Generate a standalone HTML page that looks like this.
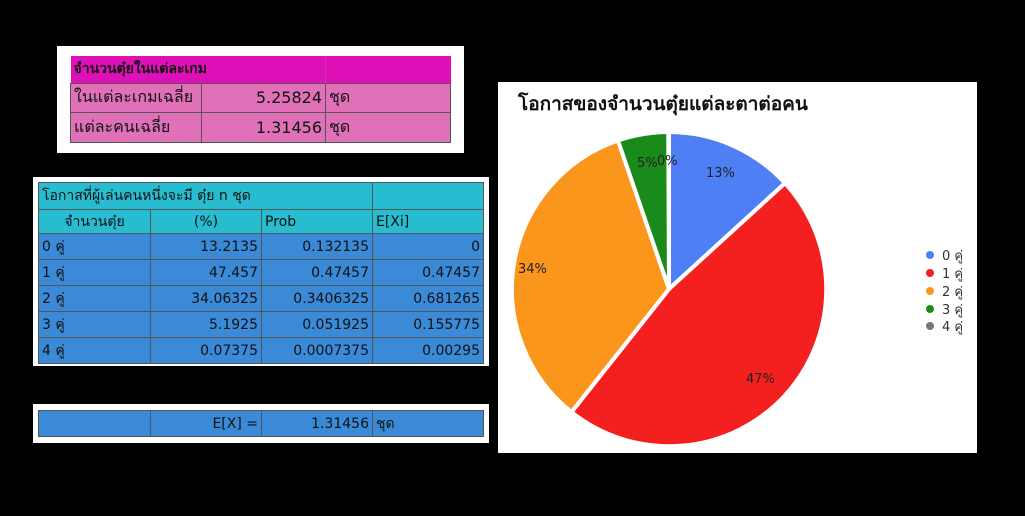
<!DOCTYPE html>
<html><head><meta charset="utf-8"><style>
body{margin:0;width:1025px;height:516px;background:#000;position:relative;overflow:hidden;font-family:"DejaVu Sans","Liberation Sans","Noto Sans CJK SC",sans-serif;}
.p{position:absolute;background:#fff;}
table{position:absolute;border-collapse:collapse;font-size:14px;color:#111;table-layout:fixed;}
td{border:1px solid #555;padding:0 3px;white-space:nowrap;overflow:hidden;}
.r{text-align:right}
</style></head><body>
<div class="p" style="left:57px;top:46px;width:407px;height:107px"></div>
<table style="left:70px;top:56px;width:381px">
<colgroup><col style="width:131px"><col style="width:124px"><col></colgroup>
<tr style="height:27px;background:#e010b8"><td colspan="2" style="border:none;font-weight:bold">จำนวนตุ๋ยในแต่ละเกม</td><td style="border:none;border-left:1px solid #c040b0"></td></tr>
<tr style="height:29px;background:#e070b8;font-size:16px"><td>ในแต่ละเกมเฉลี่ย</td><td class="r">5.25824</td><td>ชุด</td></tr>
<tr style="height:30px;background:#e070b8;font-size:16px"><td>แต่ละคนเฉลี่ย</td><td class="r">1.31456</td><td>ชุด</td></tr>
</table>

<div class="p" style="left:33px;top:177px;width:456px;height:189px"></div>
<table style="left:38px;top:182px;width:446px">
<colgroup><col style="width:112px"><col style="width:111px"><col style="width:111px"><col></colgroup>
<tr style="height:27px;background:#28bcd0"><td colspan="3">โอกาสที่ผู้เล่นคนหนึ่งจะมี ตุ๋ย n ชุด</td><td></td></tr>
<tr style="height:24px;background:#28bcd0"><td style="text-align:center">จำนวนตุ๋ย</td><td style="text-align:center">(%)</td><td>Prob</td><td>E[Xi]</td></tr>
<tr style="height:26px;background:#3a8ad8"><td>0 คู่</td><td class="r">13.2135</td><td class="r">0.132135</td><td class="r">0</td></tr>
<tr style="height:26px;background:#3a8ad8"><td>1 คู่</td><td class="r">47.457</td><td class="r">0.47457</td><td class="r">0.47457</td></tr>
<tr style="height:26px;background:#3a8ad8"><td>2 คู่</td><td class="r">34.06325</td><td class="r">0.3406325</td><td class="r">0.681265</td></tr>
<tr style="height:26px;background:#3a8ad8"><td>3 คู่</td><td class="r">5.1925</td><td class="r">0.051925</td><td class="r">0.155775</td></tr>
<tr style="height:26px;background:#3a8ad8"><td>4 คู่</td><td class="r">0.07375</td><td class="r">0.0007375</td><td class="r">0.00295</td></tr>
</table>

<div class="p" style="left:33px;top:404px;width:456px;height:39px"></div>
<table style="left:38px;top:410px;width:446px">
<colgroup><col style="width:112px"><col style="width:111px"><col style="width:111px"><col></colgroup>
<tr style="height:26px;background:#3a8ad8"><td></td><td class="r">E[X] =</td><td class="r">1.31456</td><td>ชุด</td></tr>
</table>

<div class="p" style="left:498px;top:82px;width:479px;height:371px"></div>
<svg style="position:absolute;left:0;top:0" width="1025" height="516">
<g transform="translate(669,289) scale(1.013) translate(-668,-287)">
<g stroke="#fff" stroke-width="4" stroke-linejoin="round">
<path d="M668,287 L668,132 A155,155 0 0 1 782.5,182.5 Z" fill="#4f7ff5"/>
<path d="M668,287 L782.5,182.5 A155,155 0 0 1 571.7,408.5 Z" fill="#f41f1f"/>
<path d="M668,287 L571.7,408.5 A155,155 0 0 1 617.6,140.4 Z" fill="#fb961c"/>
<path d="M668,287 L617.6,140.4 A155,155 0 0 1 667.3,132 Z" fill="#1a8a1a"/>
</g>
</g>
<g font-family="DejaVu Sans, sans-serif" font-size="13" fill="#222">
<text x="706" y="177">13%</text>
<text x="637" y="167">5%</text><text x="657" y="165">0%</text>
<text x="518" y="273">34%</text>
<text x="746" y="383">47%</text>
</g>
<text x="518" y="110" font-family="Liberation Sans, Noto Sans CJK SC, sans-serif" font-size="19" font-weight="bold" fill="#111">โอกาสของจำนวนตุ๋ยแต่ละตาต่อคน</text>
<g font-family="DejaVu Sans, Noto Sans CJK SC, sans-serif" font-size="13" fill="#333">
<circle cx="930" cy="255" r="4" fill="#4f7ff5"/><text x="942" y="260">0 คู่</text>
<circle cx="930" cy="273" r="4" fill="#f41f1f"/><text x="942" y="278">1 คู่</text>
<circle cx="930" cy="291" r="4" fill="#fb961c"/><text x="942" y="296">2 คู่</text>
<circle cx="930" cy="309" r="4" fill="#1a8a1a"/><text x="942" y="314">3 คู่</text>
<circle cx="930" cy="326" r="4" fill="#777"/><text x="942" y="331">4 คู่</text>
</g>
</svg>
</body></html>
